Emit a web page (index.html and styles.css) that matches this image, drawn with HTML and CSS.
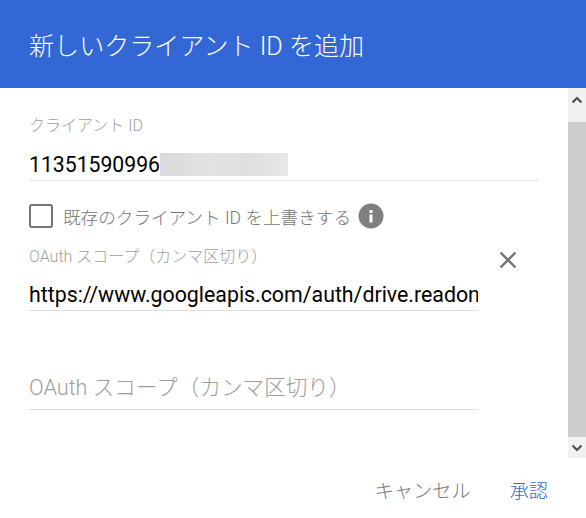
FILE: index.html
```html
<!DOCTYPE html>
<html lang="ja">
<head>
    <meta charset="UTF-8">
    <meta name="viewport" content="width=device-width, initial-scale=1.0">
    <title>新しいクライアント ID を追加</title>
    <link rel="stylesheet" href="styles.css">
</head>
<body>
    <div class="dialog">
        <div class="dialog-header">新しいクライアント ID を追加</div>

        <div class="dialog-middle">
            <div class="dialog-body">
                <!-- Client ID -->
                <div class="client-field">
                    <div class="small-label">クライアント ID</div>
                    <div class="client-value">11351590996<span class="blurred"></span></div>
                </div>

                <!-- Overwrite -->
                <div class="overwrite-row">
                    <span class="checkbox"></span>
                    <span class="overwrite-label">既存のクライアント ID を上書きする</span>
                    <svg class="info-icon" viewBox="0 0 26 26" width="26" height="26">
                        <circle cx="13" cy="13" r="12.5" fill="#7f7f7f"/>
                        <rect x="11.5" y="11.5" width="3" height="8" fill="#fff"/>
                        <rect x="11.5" y="7" width="3" height="3" fill="#fff"/>
                    </svg>
                </div>

                <!-- Scopes -->
                <div class="scope-row">
                    <div class="scope-field">
                        <div class="small-label">OAuth スコープ（カンマ区切り）</div>
                        <input class="scope-input" type="text" value="https://www.googleapis.com/auth/drive.readonly">
                    </div>
                    <svg class="remove-icon" viewBox="0 0 18 18" width="18" height="18">
                        <path d="M1.5 1.5L16.5 16.5M16.5 1.5L1.5 16.5" stroke="#757575" stroke-width="2.4" fill="none"/>
                    </svg>
                </div>
                <div class="empty-scope">
                    <input class="scope-input empty" type="text" placeholder="OAuth スコープ（カンマ区切り）">
                </div>
            </div>

            <div class="scrollbar">
                <div class="scroll-btn top">
                    <svg viewBox="0 0 12 8" width="12" height="8"><path d="M1.5 6.5L6 2L10.5 6.5" stroke="#505050" stroke-width="2.2" fill="none"/></svg>
                </div>
                <div class="scroll-thumb"></div>
                <div class="scroll-btn bottom">
                    <svg viewBox="0 0 12 8" width="12" height="8"><path d="M1.5 1.5L6 6L10.5 1.5" stroke="#505050" stroke-width="2.2" fill="none"/></svg>
                </div>
            </div>
        </div>

        <div class="dialog-footer">
            <button class="btn">キャンセル</button>
            <button class="btn primary">承認</button>
        </div>
    </div>
</body>
</html>
```

FILE: styles.css
```css
* {
    box-sizing: border-box;
}
body {
    margin: 0;
    font-family: Roboto, "Noto Sans CJK JP", sans-serif;
    background-color: #fff;
}
.dialog {
    width: 586px;
    height: 518px;
    display: flex;
    flex-direction: column;
    overflow: hidden;
}
.dialog-header {
    height: 88px;
    padding: 0 29px;
    display: flex;
    align-items: center;
    background-color: #3367d6;
    color: #fff;
    font-size: 25.07px;
    font-weight: 300;
}
.dialog-middle {
    height: 370px;
    display: flex;
}
.dialog-body {
    flex: 1;
    padding: 26px 29px 0;
}
.small-label {
    font-size: 16px;
    line-height: 24px;
    font-weight: 300;
    color: #9e9e9e;
}
.client-field {
    width: 510px;
    height: 67px;
    border-bottom: 1px solid #e0e0e0;
}
.client-value {
    margin-top: 14px;
    display: flex;
    align-items: center;
    height: 24px;
    font-size: 21.2px;
    color: #000;
}
.blurred {
    width: 128px;
    height: 23px;
    background: linear-gradient(to right, #dadada, #e2e2e2 40%, #dfdfdf 70%, #e8e8e8);
    filter: blur(0.6px);
}
.overwrite-row {
    margin-top: 22px;
    display: flex;
    align-items: center;
}
.checkbox {
    width: 24px;
    height: 24px;
    margin-right: 10px;
    border: 2px solid #757575;
    border-radius: 3px;
}
.overwrite-label {
    font-size: 17.6px;
    font-weight: 300;
    color: #757575;
}
.info-icon {
    margin-left: 7px;
}
.scope-row {
    margin-top: 16px;
    display: flex;
    align-items: flex-start;
}
.scope-field {
    width: 449px;
}
.scope-input {
    display: block;
    width: 100%;
    height: 42px;
    padding: 9px 0 0;
    border: 0;
    border-bottom: 1px solid #e0e0e0;
    outline: none;
    font-family: inherit;
    font-size: 21.33px;
    color: #000;
}
.scope-input::placeholder {
    color: #9e9e9e;
    opacity: 1;
    font-weight: 300;
}
.remove-icon {
    margin: 6px 0 0 21px;
}
.empty-scope {
    width: 449px;
    margin-top: 57px;
}
.scope-input.empty {
    padding: 0 0 3px;
    font-size: 21.6px;
}
.scrollbar {
    width: 18px;
    display: flex;
    flex-direction: column;
    background-color: #f1f1f1;
}
.scroll-btn {
    display: flex;
    justify-content: center;
}
.scroll-btn.top {
    height: 34px;
    padding-top: 8px;
}
.scroll-btn.bottom {
    height: 21px;
    padding-top: 7px;
}
.scroll-thumb {
    flex: 1;
    background-color: #cdcdcd;
}
.dialog-footer {
    flex: 1;
    display: flex;
    justify-content: flex-end;
    align-items: flex-start;
    padding: 22px 38px 0 0;
    gap: 39px;
}
.btn {
    padding: 0;
    border: 0;
    background: none;
    font-family: inherit;
    font-size: 19.2px;
    line-height: 24px;
    font-weight: 300;
    color: #757575;
    cursor: pointer;
}
.btn.primary {
    color: #3367d6;
}
```
